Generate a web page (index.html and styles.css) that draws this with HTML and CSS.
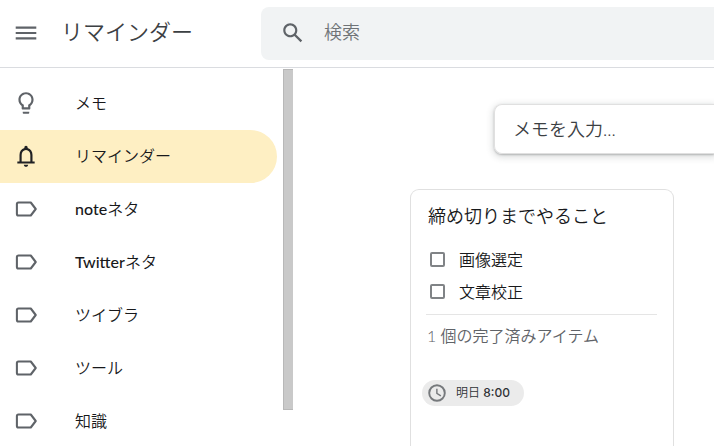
FILE: index.html
```html
<!DOCTYPE html>
<html lang="ja">
<head>
<meta charset="utf-8">
<meta name="viewport" content="width=device-width, initial-scale=1">
<title>リマインダー</title>
<link rel="stylesheet" href="styles.css">
</head>
<body>
<svg class="defs" width="0" height="0" aria-hidden="true">
  <symbol id="label" viewBox="0 0 24 24"><path d="M16.400 6H5Q3.600 6 3.600 7.400V16.600Q3.600 18 5 18H16.400L21 12Z" fill="none" stroke="currentColor" stroke-width="1.900" stroke-linejoin="round"/></symbol>
</svg>
<header class="topbar">
  <button class="menu" type="button" aria-label="メニュー">
    <svg class="icon" viewBox="0 0 24 24"><path d="M2.500 6h19v2h-19zM2.500 11h19v2h-19zM2.500 16h19v2h-19z"/></svg>
  </button>
  <h1 class="title">リマインダー</h1>
  <form class="search">
    <button class="search-button" type="button" aria-label="検索">
      <svg class="icon" viewBox="0 0 24 24"><path d="M20.490 19l-5.730-5.730C15.530 12.200 16 10.910 16 9.500 16 5.910 13.090 3 9.500 3S3 5.910 3 9.500 5.910 16 9.500 16c1.410 0 2.700-.47 3.770-1.240L19 20.490 20.490 19zM5 9.500C5 7.010 7.010 5 9.500 5S14 7.010 14 9.500 11.990 14 9.500 14 5 11.990 5 9.500z"/></svg>
    </button>
    <input class="search-input" type="text" placeholder="検索" aria-label="検索">
  </form>
</header>
<div class="content">
  <nav class="sidebar">
    <a class="item" href="#memo"><svg class="icon" viewBox="0 0 24 24"><path d="M9 21c0 .5.400 1 1 1h4c.6 0 1-.5 1-1v-1H9v1zm3-19C8.100 2 5 5.100 5 9c0 2.400 1.200 4.500 3 5.700V17c0 .5.400 1 1 1h6c.6 0 1-.5 1-1v-2.300c1.800-1.300 3-3.400 3-5.700 0-3.900-3.100-7-7-7zm2 11.700V16h-4v-2.300C8.500 12.800 7 11.500 7 9c0-2.800 2.200-5 5-5s5 2.200 5 5c0 2.500-1.500 3.800-3 4.700z"/></svg>メモ</a>
    <a class="item active" href="#reminders"><svg class="icon" viewBox="0 0 24 24"><path d="M18 17v-6c0-3.070-1.630-5.640-4.500-6.320V4c0-.83-.67-1.500-1.500-1.500s-1.500.67-1.500 1.500v.68C7.640 5.360 6 7.920 6 11v6H4v2h16v-2h-2zm-2 0H8v-6c0-2.480 1.510-4.500 4-4.500s4 2.020 4 4.500v6zm-4 5c1.100 0 2-.9 2-2h-4c0 1.100.9 2 2 2z"/></svg>リマインダー</a>
    <a class="item" href="#note"><svg class="icon"><use href="#label"/></svg><span><span class="latin">note</span>ネタ</span></a>
    <a class="item" href="#twitter"><svg class="icon"><use href="#label"/></svg><span><span class="latin">Twitter</span>ネタ</span></a>
    <a class="item" href="#tweet"><svg class="icon"><use href="#label"/></svg>ツイブラ</a>
    <a class="item" href="#tools"><svg class="icon"><use href="#label"/></svg>ツール</a>
    <a class="item" href="#knowledge"><svg class="icon"><use href="#label"/></svg>知識</a>
  </nav>
  <div class="scrollbar"><div class="thumb"></div></div>
  <main class="main">
    <input class="memo" type="text" placeholder="メモを入力..." aria-label="メモを入力">
    <article class="card">
      <h2 class="card-title">締め切りまでやること</h2>
      <div class="tasks">
        <label class="task"><input class="check" type="checkbox">画像選定</label>
        <label class="task"><input class="check" type="checkbox">文章校正</label>
      </div>
      <p class="done">1 個の完了済みアイテム</p>
      <button class="chip" type="button">
        <svg class="clock" viewBox="0 0 24 24"><path d="M12 1.500a10.500 10.500 0 1 0 0 21 10.500 10.500 0 0 0 0-21zm0 18.700a8.200 8.200 0 1 1 0-16.400 8.200 8.200 0 0 1 0 16.400zM12.700 7H11v6l5.200 3.100.9-1.400-4.400-2.600z"/></svg>
        <span>明日 <span class="time">8:00</span></span>
      </button>
    </article>
  </main>
</div>
</body>
</html>
```
FILE: styles.css
```css
* {
  box-sizing: border-box;
}

body {
  display: flex;
  flex-direction: column;
  height: 100vh;
  margin: 0;
  overflow: hidden;
  background: #fff;
  color: #18191b;
  font-family: Lato, "Noto Sans CJK JP", sans-serif;
  font-size: 16px;
  font-weight: 350;
}

button,
input {
  margin: 0;
  padding: 0;
  border: 0;
  background: none;
  color: inherit;
  font: inherit;
}

.defs {
  position: absolute;
}

.icon {
  flex: none;
  display: block;
  width: 26px;
  height: 26px;
  fill: currentColor;
}

.topbar {
  flex: none;
  display: flex;
  align-items: center;
  height: 68px;
  padding-left: 13px;
  border-bottom: 1px solid #dadce0;
  color: #5f6368;
}

.menu {
  padding-bottom: 2px;
}

.title {
  width: 200px;
  margin: 0 0 0 22px;
  padding-bottom: 3px;
  color: #3c4043;
  font-size: 22px;
  font-weight: 350;
  line-height: 32px;
}

.search {
  flex: 1;
  display: flex;
  align-items: center;
  gap: 18px;
  height: 53px;
  padding: 0 0 2px 19px;
  border-radius: 8px 0 0 8px;
  background: #f1f3f4;
}

.search-input {
  flex: 1;
  min-width: 0;
  padding-bottom: 1px;
  font-size: 18px;
  outline: 0;
}

.search-input::placeholder {
  color: #6f7377;
}

.content {
  flex: 1;
  display: flex;
  min-height: 0;
}

.sidebar {
  flex: none;
  width: 277px;
  padding-top: 9px;
}

.item {
  display: flex;
  align-items: center;
  gap: 36px;
  height: 53px;
  padding: 0 0 3px 13px;
  border-radius: 0 27px 27px 0;
  color: inherit;
  text-decoration: none;
}

.item .icon {
  margin-top: 2px;
  color: #5f6368;
}

.item.active {
  background: #feefc3;
}

.item.active .icon {
  color: #202124;
}

.latin {
  font-weight: 500;
}

.scrollbar {
  flex: none;
  width: 10px;
  margin: 1px 0 36px 6px;
}

.thumb {
  height: 100%;
  border: 1px solid #b8b8b8;
  border-right: 0;
  background: #c9c9c9;
}

.main {
  flex: 1;
  display: flex;
  flex-direction: column;
  min-width: 0;
  padding: 36px 0 0 117px;
}

.memo {
  flex: none;
  height: 50px;
  margin-left: 84px;
  padding-left: 18px;
  border: 1px solid #e0e0e0;
  border-right: 0;
  border-radius: 8px 0 0 8px;
  box-shadow: 0 1px 2px 0 rgba(60, 64, 67, .3), 0 2px 6px 2px rgba(60, 64, 67, .15);
  font-size: 18px;
  outline: 0;
}

.memo::placeholder {
  color: #3c4043;
}

.card {
  flex: 1;
  width: 264px;
  margin-top: 35px;
  padding: 13px 16px 0 15px;
  border: 1px solid #e0e0e0;
  border-bottom: 0;
  border-radius: 9px 9px 0 0;
}

.card-title {
  margin: 0 2px;
  font-size: 18px;
  font-weight: 350;
  line-height: 26px;
}

.tasks {
  padding: 14px 0 7px 4px;
  border-bottom: 1px solid #e5e5e5;
}

.task {
  display: flex;
  align-items: center;
  gap: 14px;
  height: 32px;
}

.check {
  appearance: none;
  width: 15px;
  height: 15px;
  border: 2px solid #808386;
  border-radius: 2px;
}

.done {
  margin: 9px 1px 0;
  color: #5f6368;
  line-height: 24px;
}

.chip {
  display: flex;
  align-items: center;
  gap: 9px;
  height: 26px;
  margin: 32px 0 0 -4px;
  padding: 0 14px 0 5px;
  border-radius: 13px;
  background: #ebebeb;
  color: #303336;
  font-size: 12px;
}

.chip span {
  line-height: 18px;
}

.clock {
  width: 20px;
  height: 20px;
  fill: #76797c;
}

.time {
  font-family: Inter, sans-serif;
  font-weight: 500;
}
```
